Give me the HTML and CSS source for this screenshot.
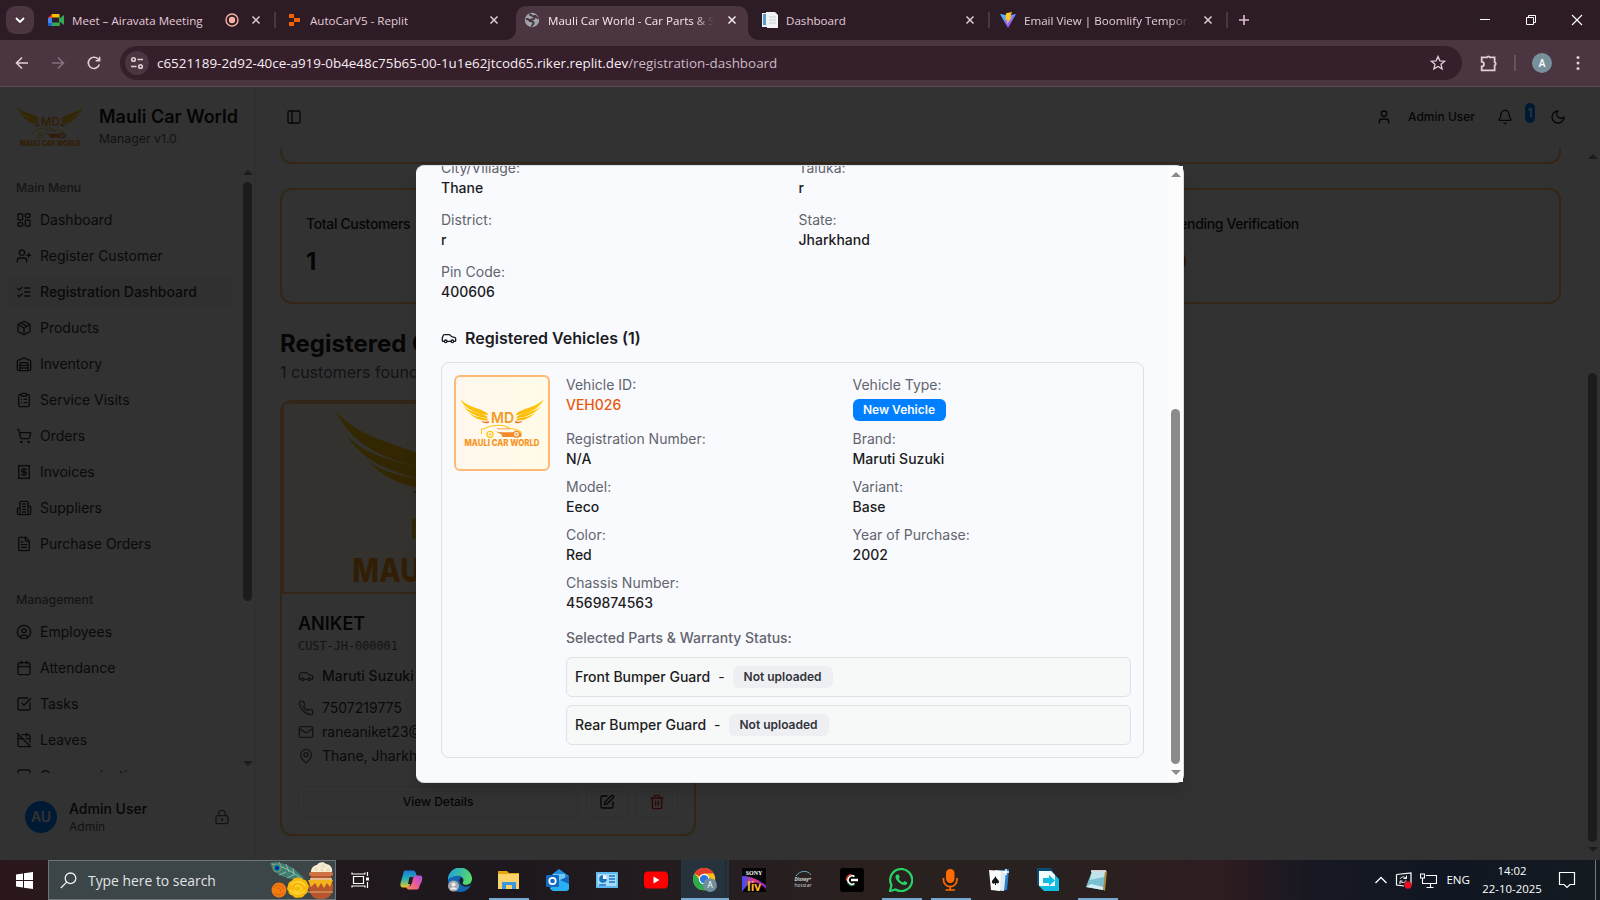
FILE: index.html
```html
<!DOCTYPE html>
<html lang="en">
<head>
<meta charset="utf-8">
<title>Mauli Car World - Car Parts &amp; Service</title>
<link rel="stylesheet" href="styles.css">
</head>
<body>
<svg class="defs" width="0" height="0">
<defs>
<symbol id="i-dash" viewBox="0 0 24 24"><rect x="3" y="3" width="7" height="9" rx="1"/><rect x="14" y="3" width="7" height="5" rx="1"/><rect x="14" y="12" width="7" height="9" rx="1"/><rect x="3" y="16" width="7" height="5" rx="1"/></symbol>
<symbol id="i-userplus" viewBox="0 0 24 24"><path d="M16 21v-2a4 4 0 0 0-4-4H6a4 4 0 0 0-4 4v2"/><circle cx="9" cy="7" r="4"/><path d="M19 8v6M22 11h-6"/></symbol>
<symbol id="i-list" viewBox="0 0 24 24"><path d="m3 17 2 2 4-4M3 7l2 2 4-4M13 6h8M13 12h8M13 18h8"/></symbol>
<symbol id="i-box" viewBox="0 0 24 24"><path d="M11 21.73a2 2 0 0 0 2 0l7-4A2 2 0 0 0 21 16V8a2 2 0 0 0-1-1.73l-7-4a2 2 0 0 0-2 0l-7 4A2 2 0 0 0 3 8v8a2 2 0 0 0 1 1.73zM12 22V12M3.3 7l8.7 5 8.7-5M7.5 4.27l9 5.15"/></symbol>
<symbol id="i-ware" viewBox="0 0 24 24"><path d="M22 8.35V20a2 2 0 0 1-2 2H4a2 2 0 0 1-2-2V8.35A2 2 0 0 1 3.26 6.5l8-3.2a2 2 0 0 1 1.48 0l8 3.2A2 2 0 0 1 22 8.35ZM6 18h12M6 14h12"/><path d="M6 22V10h12v12"/></symbol>
<symbol id="i-clip" viewBox="0 0 24 24"><rect x="8" y="2" width="8" height="4" rx="1"/><path d="M16 4h2a2 2 0 0 1 2 2v14a2 2 0 0 1-2 2H6a2 2 0 0 1-2-2V6a2 2 0 0 1 2-2h2M12 11h4M12 16h4M8 11h.01M8 16h.01"/></symbol>
<symbol id="i-cart" viewBox="0 0 24 24"><circle cx="8" cy="21" r="1"/><circle cx="19" cy="21" r="1"/><path d="M2.05 2.05h2l2.66 12.42a2 2 0 0 0 2 1.58h9.78a2 2 0 0 0 1.95-1.57l1.65-7.43H5.12"/></symbol>
<symbol id="i-receipt" viewBox="0 0 24 24"><path d="M4 2v20l2-1 2 1 2-1 2 1 2-1 2 1 2-1 2 1V2l-2 1-2-1-2 1-2-1-2 1-2-1-2 1Z"/><path d="M16 8h-6a2 2 0 1 0 0 4h4a2 2 0 1 1 0 4H8M12 17.5v-11"/></symbol>
<symbol id="i-bldg" viewBox="0 0 24 24"><path d="M6 22V4a2 2 0 0 1 2-2h8a2 2 0 0 1 2 2v18ZM6 12H4a2 2 0 0 0-2 2v6a2 2 0 0 0 2 2h2M18 9h2a2 2 0 0 1 2 2v9a2 2 0 0 1-2 2h-2M10 6h4M10 10h4M10 14h4M10 18h4"/></symbol>
<symbol id="i-file" viewBox="0 0 24 24"><path d="M15 2H6a2 2 0 0 0-2 2v16a2 2 0 0 0 2 2h12a2 2 0 0 0 2-2V7Z"/><path d="M14 2v4a2 2 0 0 0 2 2h4M10 9H8M16 13H8M16 17H8"/></symbol>
<symbol id="i-usercircle" viewBox="0 0 24 24"><circle cx="12" cy="12" r="10"/><circle cx="12" cy="10" r="3"/><path d="M7 20.66V19a2 2 0 0 1 2-2h6a2 2 0 0 1 2 2v1.66"/></symbol>
<symbol id="i-cal" viewBox="0 0 24 24"><rect x="3" y="4" width="18" height="18" rx="2"/><path d="M8 2v4M16 2v4M3 10h18"/></symbol>
<symbol id="i-check" viewBox="0 0 24 24"><path d="M21 10.5V19a2 2 0 0 1-2 2H5a2 2 0 0 1-2-2V5a2 2 0 0 1 2-2h12.5M9 11l3 3L22 4"/></symbol>
<symbol id="i-caloff" viewBox="0 0 24 24"><path d="M4.2 4.2A2 2 0 0 0 3 6v14a2 2 0 0 0 2 2h14a2 2 0 0 0 1.82-1.18M21 15.5V6a2 2 0 0 0-2-2H9.5M16 2v4M3 10h7M21 10h-5.5M2 2l20 20"/></symbol>
<symbol id="i-msg" viewBox="0 0 24 24"><path d="M21 15a2 2 0 0 1-2 2H7l-4 4V5a2 2 0 0 1 2-2h14a2 2 0 0 1 2 2z"/></symbol>
<symbol id="i-lock" viewBox="0 0 24 24"><circle cx="12" cy="16" r="1"/><rect x="3" y="10" width="18" height="12" rx="2"/><path d="M7 10V7a5 5 0 0 1 10 0v3"/></symbol>
<symbol id="i-panel" viewBox="0 0 24 24"><rect x="3" y="3" width="18" height="18" rx="2"/><path d="M9 3v18"/></symbol>
<symbol id="i-user" viewBox="0 0 24 24"><path d="M19 21v-2a4 4 0 0 0-4-4H9a4 4 0 0 0-4 4v2"/><circle cx="12" cy="7" r="4"/></symbol>
<symbol id="i-bell" viewBox="0 0 24 24"><path d="M10.27 21a2 2 0 0 0 3.46 0M3.26 15.33A1 1 0 0 0 4 17h16a1 1 0 0 0 .74-1.67C19.41 13.96 18 12.5 18 8A6 6 0 0 0 6 8c0 4.5-1.41 5.96-2.74 7.33"/></symbol>
<symbol id="i-moon" viewBox="0 0 24 24"><path d="M12 3a6 6 0 0 0 9 9 9 9 0 1 1-9-9Z"/></symbol>
<symbol id="i-car" viewBox="0 0 24 24"><path d="M19 17h2c.6 0 1-.4 1-1v-3c0-.9-.7-1.7-1.5-1.9C18.7 10.6 16 10 16 10s-1.3-1.4-2.2-2.3c-.5-.4-1.1-.7-1.8-.7H5c-.6 0-1.1.4-1.4.9l-1.4 2.9A3.7 3.7 0 0 0 2 12v4c0 .6.4 1 1 1h2M9 17h6"/><circle cx="7" cy="17" r="2"/><circle cx="17" cy="17" r="2"/></symbol>
<symbol id="i-phone" viewBox="0 0 24 24"><path d="M22 16.92v3a2 2 0 0 1-2.18 2 19.79 19.79 0 0 1-8.63-3.07 19.5 19.5 0 0 1-6-6 19.79 19.79 0 0 1-3.07-8.67A2 2 0 0 1 4.11 2h3a2 2 0 0 1 2 1.72 12.84 12.84 0 0 0 .7 2.81 2 2 0 0 1-.45 2.11L8.09 9.91a16 16 0 0 0 6 6l1.27-1.27a2 2 0 0 1 2.11-.45 12.84 12.84 0 0 0 2.81.7A2 2 0 0 1 22 16.92z"/></symbol>
<symbol id="i-mail" viewBox="0 0 24 24"><rect x="2" y="4" width="20" height="16" rx="2"/><path d="m22 7-8.97 5.7a1.94 1.94 0 0 1-2.06 0L2 7"/></symbol>
<symbol id="i-pin" viewBox="0 0 24 24"><path d="M20 10c0 5-5.54 10.19-7.4 11.8a1 1 0 0 1-1.2 0C9.54 20.19 4 15 4 10a8 8 0 0 1 16 0"/><circle cx="12" cy="10" r="3"/></symbol>
<symbol id="i-edit" viewBox="0 0 24 24"><path d="M12 3H5a2 2 0 0 0-2 2v14a2 2 0 0 0 2 2h14a2 2 0 0 0 2-2v-7"/><path d="M18.38 2.62a1 1 0 0 1 3 3l-9.01 9.01a2 2 0 0 1-.85.5l-2.87.84a.5.5 0 0 1-.62-.62l.84-2.87a2 2 0 0 1 .5-.85z"/></symbol>
<symbol id="i-trash" viewBox="0 0 24 24"><path d="M3 6h18M19 6v14a2 2 0 0 1-2 2H7a2 2 0 0 1-2-2V6M8 6V4a2 2 0 0 1 2-2h4a2 2 0 0 1 2 2v2M10 11v6M14 11v6"/></symbol>
<symbol id="i-x" viewBox="0 0 10 10"><path d="M1.5 1.5l7 7M8.5 1.5l-7 7"/></symbol>
<linearGradient id="wing" x1="0" y1="0" x2="0" y2="1"><stop offset="0" stop-color="#ffcf00"/><stop offset="1" stop-color="#fbb80f"/></linearGradient>
<g id="wing-shape"><path d="M0 0C8 8 17 8.500 25 12.500c2 1 3 2.500 3 3.500C17 14.500 5 10.500 0 0Z" fill="url(#wing)"/><path d="M3 6.500c6 6.500 15 7 22 9.500 2 1 2.500 2 2.500 3.200C17 17.500 8 14.500 3 6.500Z" fill="url(#wing)"/><path d="M9 13.500c5 4 11 4 16 5.500 2 .7 3 1.500 3 2.300-7 0-14-2-19-7.800Z" fill="url(#wing)"/><path d="M21 21.700c2 .8 5 1 8 .3v1.600c-3 .8-6 0-8-1.900Z" fill="#e8702a"/></g>
<symbol id="logo" viewBox="0 0 84 47.500" preserveAspectRatio="none">
<use href="#wing-shape"/><use href="#wing-shape" transform="translate(84 0) scale(-1 1)"/>
<text x="31" y="23.700" textLength="23" lengthAdjust="spacingAndGlyphs" class="logo-md">MD</text>
<path d="M21.500 35v-5c4-.5 7-3 11-3.600 7-1 13-.5 17 2.600 5 .6 10 1 12 4.500" fill="none" stroke="#ffc61a" stroke-width="1"/>
<path d="M34 32c9 2 18 0 27 1.500 1 2 .5 4-1 4.200H42c1-3-3-4-8-5.700Z" fill="#f08a2c"/>
<path d="M37 29.500h13" stroke="#f08a2c" stroke-width=".8"/>
<circle cx="30" cy="35" r="3" fill="none" stroke="#ffc61a" stroke-width="1.300"/><circle cx="30" cy="35" r="1" fill="#ffc61a"/>
<circle cx="56.500" cy="35" r="3" fill="#fff4d8" stroke="#f08a2c" stroke-width="1.300"/><circle cx="56.500" cy="35" r="1" fill="#f08a2c"/>
<text x="4.500" y="47" textLength="75" lengthAdjust="spacingAndGlyphs" class="logo-name">MAULI CAR WORLD</text>
</symbol>
</defs>
</svg>

<header class="tabs">
  <div class="tab-search"><svg width="10" height="6" viewBox="0 0 10 6"><path d="M1 1l4 4 4-4" fill="none" stroke="#fff" stroke-width="1.800"/></svg></div>
  <div class="tab t1">
    <svg class="fav" viewBox="0 0 16 16"><path d="M4 2h7v3.500H4z" fill="#fbbc04"/><path d="M4 2v4H0z" fill="#ea4335"/><path d="M0 6h4v5H0z" fill="#4285f4"/><path d="M0 11h4v3H1.500A1.500 1.500 0 0 1 0 12.500z" fill="#1a67d2"/><path d="M4 10.500h7V14H4z" fill="#34a853"/><path d="M11 2h.8v12H11zM11.500 6.500 16 3v10l-4.500-3.500z" fill="#34a853"/></svg>
    <span class="tab-title">Meet – Airavata Meeting</span>
    <svg class="rec" viewBox="0 0 14 14"><circle cx="7" cy="7" r="6" fill="none" stroke="#f7b2a6" stroke-width="1.400"/><circle cx="7" cy="7" r="3.200" fill="#f7b2a6"/></svg>
    <svg class="x"><use href="#i-x"/></svg>
  </div>
  <i class="tsep"></i>
  <div class="tab t2">
    <svg class="fav" viewBox="0 0 16 16"><path d="M3 2h5v4H3zM8 6h6v4H8zM3 10h5v4H3z" fill="#f26207"/></svg>
    <span class="tab-title">AutoCarV5 - Replit</span>
    <svg class="x"><use href="#i-x"/></svg>
  </div>
  <div class="tab t3 active">
    <svg class="fav" viewBox="0 0 16 16"><circle cx="8" cy="8" r="7.200" fill="#9fa5a8"/><path d="M5 2.500c3 0 3 2 5 2s0 3-2 3-1 2 1 2.500-1 4-2 4M2 7c3 0 4 1 4 3M11 3c0 2 3 2 3 4" fill="none" stroke="#4a3440" stroke-width="1.900"/></svg>
    <span class="tab-title fade">Mauli Car World - Car Parts &amp; Se</span>
    <svg class="x"><use href="#i-x"/></svg>
  </div>
  <div class="tab t4">
    <svg class="fav" viewBox="0 0 16 16"><path d="M0 1h6v14H0z" fill="#e8f2f8"/><path d="M1 2h3v11H1z" fill="#5c9dc4"/><path d="M4 0h9l3 3v13H5z" fill="#f1f3f4"/><path d="M7 5h7M7 8h7M7 11h7" stroke="#c5ccd1"/></svg>
    <span class="tab-title">Dashboard</span>
    <svg class="x"><use href="#i-x"/></svg>
  </div>
  <i class="tsep"></i>
  <div class="tab t5">
    <svg class="fav" viewBox="0 0 16 16"><defs><linearGradient id="vt" x1="0" y1="0" x2=".7" y2="1"><stop offset="0" stop-color="#41d1ff"/><stop offset="1" stop-color="#bd34fe"/></linearGradient></defs><path d="M0 2l8 1.500L16 2 8 16z" fill="url(#vt)"/><path d="M12 0 6 1.200 5.500 8l2-.4L7 12l5-7.500-2 .4z" fill="#ffc920"/></svg>
    <span class="tab-title fade">Email View | Boomlify Temporary</span>
    <svg class="x"><use href="#i-x"/></svg>
  </div>
  <i class="tsep"></i>
  <svg class="plus" viewBox="0 0 12 12"><path d="M6 1v10M1 6h10" stroke="#e0c0d0" stroke-width="1.600"/></svg>
  <div class="winbtns">
    <svg viewBox="0 0 12 12"><path d="M1 5.500h10" stroke="#fff"/></svg>
    <svg viewBox="0 0 12 12"><path d="M1.500 3.500h7v7h-7zM3.500 3.500v-2h7v7h-2" fill="none" stroke="#fff"/></svg>
    <svg viewBox="0 0 12 12"><path d="M1 1l10 10M11 1 1 11" stroke="#fff" stroke-width="1.100"/></svg>
  </div>
</header>

<div class="toolbar">
  <svg class="nav" viewBox="0 0 16 16"><path d="M14 8H3M8 2.500 2.500 8 8 13.500"/></svg>
  <svg class="nav dim" viewBox="0 0 16 16"><path d="M2 8h11M8 2.500 13.500 8 8 13.500"/></svg>
  <svg class="nav" viewBox="0 0 16 16"><path d="M13.300 9.500A5.600 5.600 0 1 1 12 4l1.500 1.600M13.600 1.800v4H9.600"/></svg>
  <div class="omni">
    <span class="chip"><svg width="14" height="14" viewBox="0 0 14 14"><circle cx="3.500" cy="3.500" r="1.800"/><path d="M7.500 3.500H13M1 10.500h5.500"/><circle cx="10.500" cy="10.500" r="1.800"/></svg></span>
    <span class="url">c6521189-2d92-40ce-a919-0b4e48c75b65-00-1u1e62jtcod65.riker.replit.dev<em>/registration-dashboard</em></span>
    <svg class="star" viewBox="0 0 16 16"><path d="m8 1.500 1.900 4.300 4.700.4-3.600 3 1.100 4.600L8 11.400l-4.100 2.400L5 9.200l-3.600-3 4.700-.4z"/></svg>
  </div>
  <svg class="puzzle" viewBox="0 0 16 16"><path d="M1.500 3h4.700a1.400 1.400 0 0 1 2.600 0H13v4.200a1.500 1.500 0 0 1 0 2.800v4.500H1.500V11a2 2 0 0 0 0-4z"/></svg>
  <i class="bsep"></i>
  <span class="avatar-a">A</span>
  <svg class="dots" viewBox="0 0 4 16"><circle cx="2" cy="2.500" r="1.500"/><circle cx="2" cy="8" r="1.500"/><circle cx="2" cy="13.500" r="1.500"/></svg>
</div>

<div class="app">
  <aside class="sidebar">
    <div class="brand">
      <svg class="brand-logo"><use href="#logo"/></svg>
      <div><div class="brand-name">Mauli Car World</div><div class="brand-sub">Manager v1.0</div></div>
    </div>
    <div class="side-body">
      <nav class="menu">
        <div class="label">Main Menu</div>
        <a><svg class="ic"><use href="#i-dash"/></svg>Dashboard</a>
        <a><svg class="ic"><use href="#i-userplus"/></svg>Register Customer</a>
        <a class="on"><svg class="ic"><use href="#i-list"/></svg>Registration Dashboard</a>
        <a><svg class="ic"><use href="#i-box"/></svg>Products</a>
        <a><svg class="ic"><use href="#i-ware"/></svg>Inventory</a>
        <a><svg class="ic"><use href="#i-clip"/></svg>Service Visits</a>
        <a><svg class="ic"><use href="#i-cart"/></svg>Orders</a>
        <a><svg class="ic"><use href="#i-receipt"/></svg>Invoices</a>
        <a><svg class="ic"><use href="#i-bldg"/></svg>Suppliers</a>
        <a><svg class="ic"><use href="#i-file"/></svg>Purchase Orders</a>
        <div class="label second">Management</div>
        <a><svg class="ic"><use href="#i-usercircle"/></svg>Employees</a>
        <a><svg class="ic"><use href="#i-cal"/></svg>Attendance</a>
        <a><svg class="ic"><use href="#i-check"/></svg>Tasks</a>
        <a><svg class="ic"><use href="#i-caloff"/></svg>Leaves</a>
        <a><svg class="ic"><use href="#i-msg"/></svg>Communication</a>
      </nav>
      <div class="sb sb-side"><i class="up"></i><b></b><i class="down"></i></div>
    </div>
    <div class="side-foot">
      <span class="au">AU</span>
      <div class="who"><div>Admin User</div><small>Admin</small></div>
      <svg class="ic"><use href="#i-lock"/></svg>
    </div>
  </aside>
  <main class="main">
    <div class="topbar">
      <svg class="ic"><use href="#i-panel"/></svg>
      <div class="topright">
        <svg class="ic"><use href="#i-user"/></svg>
        <span class="tname">Admin User</span>
        <svg class="ic bell"><use href="#i-bell"/></svg>
        <span class="count">1</span>
        <svg class="ic"><use href="#i-moon"/></svg>
      </div>
    </div>
    <div class="scroller">
      <div class="content">
        <div class="cut-card"></div>
        <div class="stats">
          <div class="stat first"><div class="st">Total Customers</div><div class="num">1</div></div>
          <div class="stat mid"></div>
          <div class="stat last"><div class="st">Pending Verification</div><div class="num red">0</div></div>
        </div>
        <h2>Registered Customers</h2>
        <p class="found">1 customers found</p>
        <div class="customer">
          <div class="photo"><svg><use href="#logo"/></svg></div>
          <div class="cbody">
            <h3>ANIKET</h3>
            <div class="cid">CUST-JH-000001</div>
            <div class="row car"><svg class="ic"><use href="#i-car"/></svg>Maruti Suzuki Eeco</div>
            <div class="row"><svg class="ic"><use href="#i-phone"/></svg>7507219775</div>
            <div class="row"><svg class="ic"><use href="#i-mail"/></svg>raneaniket23@</div>
            <div class="row"><svg class="ic"><use href="#i-pin"/></svg>Thane, Jharkhand</div>
            <div class="btns">
              <span class="btn wide">View Details</span>
              <span class="btn"><svg class="ic"><use href="#i-edit"/></svg></span>
              <span class="btn del"><svg class="ic"><use href="#i-trash"/></svg></span>
            </div>
          </div>
        </div>
      </div>
      <div class="sb sb-main"><i class="up"></i><b></b><i class="down"></i></div>
    </div>
  </main>
  <div class="overlay"></div>
  <div class="modal">
    <div class="mclip">
      <div class="mcontent">
        <div class="addr">
          <div><label>City/Village:</label><p>Thane</p></div>
          <div><label>Taluka:</label><p>r</p></div>
          <div><label>District:</label><p>r</p></div>
          <div><label>State:</label><p>Jharkhand</p></div>
          <div><label>Pin Code:</label><p>400606</p></div>
        </div>
        <h4><svg class="ic"><use href="#i-car"/></svg>Registered Vehicles (1)</h4>
        <div class="vehicle">
          <div class="thumb"><svg><use href="#logo"/></svg></div>
          <div class="vinfo">
            <div class="vgrid">
              <div><label>Vehicle ID:</label><p class="vid">VEH026</p></div>
              <div><label>Vehicle Type:</label><span class="badge">New Vehicle</span></div>
              <div><label>Registration Number:</label><p>N/A</p></div>
              <div><label>Brand:</label><p>Maruti Suzuki</p></div>
              <div><label>Model:</label><p>Eeco</p></div>
              <div><label>Variant:</label><p>Base</p></div>
              <div><label>Color:</label><p>Red</p></div>
              <div><label>Year of Purchase:</label><p>2002</p></div>
              <div><label>Chassis Number:</label><p>4569874563</p></div>
            </div>
            <div class="parts-label">Selected Parts &amp; Warranty Status:</div>
            <div class="part"><span>Front Bumper Guard</span><span class="dash">-</span><span class="badge grey">Not uploaded</span></div>
            <div class="part"><span>Rear Bumper Guard</span><span class="dash">-</span><span class="badge grey">Not uploaded</span></div>
          </div>
        </div>
      </div>
      <div class="sb sb-modal"><i class="up"></i><b></b><i class="down"></i></div>
    </div>
  </div>
</div>

<footer class="taskbar">
  <span class="start"><svg width="17" height="17" viewBox="0 0 17 17"><path d="M0 2.400 7 1.400V8H0zM8 1.300 17 0v8H8zM0 9h7v6.600L0 14.600zM8 9h9v8l-9-1.300z" fill="#fff"/></svg></span>
  <div class="search">
    <svg width="17" height="17" viewBox="0 0 17 17"><circle cx="10.500" cy="6.300" r="5.300" fill="none" stroke="#f0f0f0" stroke-width="1.300"/><path d="M6.700 10.100.8 16" stroke="#f0f0f0" stroke-width="1.300"/></svg>
    <span>Type here to search</span>
    <svg class="art" viewBox="0 0 64 38"><path d="M1 2c8-3 22 2 32 13 2 2 2 3 1 4C22 19 5 16 1 2Z" fill="#3f7f78"/><path d="M3 3c10 2 22 8 31 16M10 1l3 6M17 3l3 8M24 7l1 8M5 9l6-2M10 14l7-3M18 17l6-3" stroke="#a8c9a0" stroke-width=".8" fill="none"/><circle cx="8" cy="7" r="4.500" fill="#8f8a4a"/><circle cx="8" cy="7" r="3.400" fill="#0a90a8"/><circle cx="8" cy="7" r="2" fill="#16208a"/><circle cx="10" cy="29" r="7.500" fill="#f27a10"/><path d="M4 27c4-4 9-3 11 1M5 32c3 3 8 2 10-1M8 28c2-2 5 0 3 3" stroke="#d9600a" fill="none"/><path d="M42 14h20v5c3 5 3 11-2 17-5 3-11 3-16 0-5-6-5-12-2-17z" fill="#b9552c"/><path d="M41 18h22" stroke="#f6dfb0" stroke-width="1.500"/><path d="M39 31h25" stroke="#e0b070" stroke-width="1"/><path d="M39 19h25l-3 7-3-4-3 5-3-5-3 5-3-5-4 4z" fill="#f3b21e"/><rect x="40" y="11" width="24" height="4" rx="2" fill="#cf7345"/><path d="M42 11c0-5 4-7 6-7 1-3 7-4 9-1 4 0 7 4 6 8z" fill="#f7ecd2"/><circle cx="47" cy="8" r="1.500" fill="#e8d8b4"/><circle cx="54" cy="5" r="1.500" fill="#e8d8b4"/><circle cx="59" cy="9" r="1.500" fill="#e8d8b4"/><circle cx="53" cy="9" r="1.300" fill="#e8d8b4"/><path d="M29 16.500c3 0 4 1 5 2 3 0 4 2 4.500 4 2 2 1.500 4 .5 6 0 3-1 4-3 5-2 3-4 3.500-6 3-3 1-5 0-6.500-2-3-.5-4-2-4-4-2-2-1.500-4-.5-6 0-3 2-4 4-5 1-2 3-3 6-3Z" fill="#f9b80c"/><path d="M22 24c4-5 12-4 14 1M21 29c4 5 12 5 15 0M26 26c3-3 8 0 6 3-2 3-7 2-7-1" stroke="#ffdc3c" stroke-width="1.300" fill="none"/></svg>
  </div>
  <div class="apps">
    <span class="view"><svg viewBox="0 0 24 24"><path d="M5.500 8.500h10v7h-10zM4 4.500v1.500h13V4.500M4 19.500V18h13v1.500M19.500 4v4M19.500 14v6" fill="none" stroke="#fff" stroke-width="1.200"/><path d="M18 9.500h3v3h-3z" fill="#fff"/></svg></span>
    <span><svg viewBox="0 0 24 24"><defs><linearGradient id="c1" x1="0" y1="0" x2="0" y2="1"><stop offset="0" stop-color="#1a78d8"/><stop offset=".5" stop-color="#25b1b0"/><stop offset="1" stop-color="#f0c52a"/></linearGradient><linearGradient id="c2" x1="1" y1="0" x2="0" y2="1"><stop offset="0" stop-color="#a150e8"/><stop offset=".5" stop-color="#e85a9a"/><stop offset="1" stop-color="#ff8b4a"/></linearGradient></defs><path d="M6 2.500h8c2 0 2.500 1.500 3 3l1 3c-4-1-5 1-6 4l-1 4c-1 3-2 3-4 3H4c-3 0-3-3-2-6l2-7c.5-2 1-4 2-4Z" fill="url(#c1)"/><path d="M18 21.500h-8c-2 0-2.500-1.500-3-3 4 1 5-1 6-4l1-4c1-3 2-3 4-3h3c3 0 2.500 3 1.700 6L20.500 18c-.5 2-1 3.500-2.500 3.500Z" fill="url(#c2)"/><path d="M10.500 9h3l-1.500 7H9z" fill="#241c1f"/></svg></span>
    <span><svg viewBox="0 0 24 24"><defs><linearGradient id="ed" x1="0" x2="1" y1="0" y2=".3"><stop offset="0" stop-color="#1b9de2"/><stop offset="1" stop-color="#55d96b"/></linearGradient></defs><circle cx="12" cy="12" r="12" fill="#1265b5"/><path d="M0 12A12 12 0 0 1 24 11c0 4-3 6-6 6-4 0-4-2-3-3 2-4-2-7-6-6-4 0-8 2-9 4Z" fill="url(#ed)"/><path d="M13.500 9.500c-2.500 1-3 3.500-1.500 6 2 3 6 4 10.500 2.200L24 15v-3l-1 2.500c-2 2.500-6 3-8 1.500-1.200-1 .5-2 .3-3.800-.2-1.300-.9-2.200-1.800-2.700Z" fill="#1d1f26"/><circle cx="5.500" cy="18" r="5.500" fill="#a6abb0"/><circle cx="5.500" cy="16.500" r="2" fill="#eee"/><path d="M2 21.500c1-3 6-3 7 0z" fill="#eee"/></svg></span>
    <span class="open"><svg viewBox="0 0 24 24"><path d="M1 3h9l2 2h10v4H1z" fill="#e5a50f"/><path d="M1 6h21v15H1z" fill="#fcd36a"/><path d="M5 21v-7h14v7h-4v-4H9v4z" fill="#3a96dd"/></svg></span>
    <span><svg viewBox="0 0 24 24"><path d="M4 8 13 1l10 7v13H4z" fill="#1f8de0"/><path d="M7 6h12v9H7z" fill="#6fc7f6"/><path d="m4 21 10-9 9-4v12q0 3-3 3H7z" fill="#2ab0f4"/><path d="m14 12 9-4v8z" fill="#1763b5"/><rect y="7" width="13" height="12" rx="1" fill="#1269bf"/><circle cx="6.500" cy="13" r="3.200" fill="none" stroke="#fff" stroke-width="1.800"/></svg></span>
    <span><svg viewBox="0 0 24 24"><path d="M1 4h22v16H1z" fill="#5fb9ee"/><path d="M2.500 6h19v12h-19z" fill="#a5dcf8"/><circle cx="8" cy="11" r="3.800" fill="#1a74be"/><path d="M8 11V7a4 4 0 0 1 4 4z" fill="#fff"/><path d="M14 8h6M14 11h6M14 14h6M4 17h7" stroke="#1a74be" stroke-width="1.500"/></svg></span>
    <span><svg viewBox="0 0 24 24"><rect y="3.500" width="24" height="17" rx="4" fill="#f00"/><path d="m9.500 8.500 6 3.500-6 3.500z" fill="#fff"/></svg></span>
    <span class="open current"><svg viewBox="0 0 26 26"><circle cx="12" cy="12" r="12" fill="#fbc116"/><path d="M12 12 1.600 6A12 12 0 0 1 22.400 6H12z" fill="#e33b2e"/><path d="M1.600 6A12 12 0 0 0 12 24l5-9H9z" fill="#2da94f"/><circle cx="12" cy="12" r="5.700" fill="#fff"/><circle cx="12" cy="12" r="4.500" fill="#2f74e0"/><circle cx="18.500" cy="18.500" r="7.500" fill="#728d9b"/><text x="18.500" y="22" text-anchor="middle" class="a-txt">A</text></svg></span>
    <span><svg viewBox="0 0 24 24"><defs><linearGradient id="sl" x1="0" x2="1"><stop offset="0" stop-color="#3b4cf0"/><stop offset=".5" stop-color="#e13a8a"/><stop offset="1" stop-color="#7a28c8"/></linearGradient></defs><path fill="#050406" d="M0 0h24v24H0z"/><path d="M0 8c8 0 15 3 24 9v4C15 12 8 12 0 24z" fill="url(#sl)"/><text x="12" y="6.800" text-anchor="middle" class="sony">SONY</text><text x="5" y="22.500" class="liv">liv</text></svg></span>
    <span><svg viewBox="0 0 24 24"><path d="M5 8c4-6 12-6 15-1" stroke="#5fa8b8" fill="none"/><text x="12" y="13" text-anchor="middle" textLength="17" lengthAdjust="spacingAndGlyphs" class="hot it">Disney+</text><text x="12" y="19" text-anchor="middle" textLength="17" lengthAdjust="spacingAndGlyphs" class="hot">hotstar</text></svg></span>
    <span><svg viewBox="0 0 24 24"><rect width="24" height="24" rx="3" fill="#000"/><path d="M14.500 8.500a4.200 4.200 0 1 0 0 7" stroke="#fff" stroke-width="1.800" fill="none"/><path d="M11 6.500a5.500 5.500 0 0 0-4.500 6" stroke="#e34a35" stroke-width="1.500" fill="none"/><path d="M7.500 15c2 3 5 3 7 1.500" stroke="#3ba55d" fill="none"/><path d="M11 12h7" stroke="#fff" stroke-width="2.500"/></svg></span>
    <span class="open"><svg viewBox="0 0 24 24"><path d="M1 23l1.500-5.800A11 11 0 1 1 6.600 21.500z" fill="none" stroke="#28d366" stroke-width="2.200"/><path d="M8 6.500c-2 1-2 3.500.5 6.500s5.500 4.500 8 4c1.500-.5 2-2 1.500-2.700L15.500 13l-1.500 1.500c-2-.8-3.300-2-4.200-3.800L10.800 9 9.500 6.500z" fill="#28d366"/></svg></span>
    <span class="open"><svg viewBox="0 0 24 24"><rect x="8" y="1" width="8.500" height="14" rx="4.200" fill="#ff6b00"/><path d="M5.500 10v2a6.700 6.700 0 0 0 13.400 0v-2M12.200 18.500V22M7.500 22h9.500" stroke="#ff6b00" stroke-width="1.700" fill="none"/></svg></span>
    <span><svg viewBox="0 0 24 24"><path d="m11 3 11-2-2 21-9 1z" fill="#2a7fd0"/><path d="m8 2 11 1-2 20-9-1z" fill="#dfeaf4"/><path d="m2 2 12 1-1 20-9-1z" fill="#fafafa"/><path d="M8.500 8c-1 3-4 4-3.500 6.500.5 1.500 2.500 1.500 3 .2V17h1v-2.300c1 1.300 3 .8 3-.7 0-2.500-3-3-3.500-6Z" fill="#111"/><path d="M19 1v6M16 4h6" stroke="#fff" stroke-width="1.500"/></svg></span>
    <span><svg viewBox="0 0 24 24"><path d="M1 0h14l3 5v12H1z" fill="#0c4a73"/><path d="M3 3h12l8 8v12H8l-5-5z" fill="#12bce0"/><path d="M3 3h12l4 4v11H3z" fill="#f4fbfd"/><path d="M7 10h6V7l6 5.500-6 5.500v-3H7z" fill="#12bce0"/></svg></span>
    <span class="open"><svg viewBox="0 0 24 24"><path d="m8 2 14 1-2 20-3-2z" fill="#b08a3c"/><path d="m7 3 13 0-2 19L1 19z" fill="#79bfd0"/><path d="m7 3 13 0-1 6L5 12z" fill="#c0e3ea"/><path d="M6 3h15" stroke="#d7dde0" stroke-width="1.800"/><path d="m1 19 5-3 12 3v3z" fill="#d4eef4"/></svg></span>
  </div>
  <div class="tray">
    <svg width="14" height="14" viewBox="0 0 14 14"><path d="m1.500 10 5.500-5.500L12.500 10" fill="none" stroke="#fff" stroke-width="1.300"/></svg>
    <svg width="18" height="17" viewBox="0 0 18 17"><path d="M1.500 2.500 16 1v11.500M9 14l-7.500-1V2.500" fill="none" stroke="#fff" stroke-width="1.200"/><path d="M5 7c1-2 4-3 6-1M11.500 3.500v3h-3M11 8.500c-1 2-4 3-5.500 1M5 12V9h2.500" stroke="#fff" fill="none"/><circle cx="13" cy="13" r="3.700" fill="#e81123"/></svg>
    <svg width="17" height="17" viewBox="0 0 17 17"><path d="M6 3.500h10.500v8H5M10.500 11.500v3.500M6.500 15.500h7M.5 2h4v4h-4zM2.500 6v5.500H5" fill="none" stroke="#fff" stroke-width="1.100"/></svg>
    <span class="lang">ENG</span>
    <div class="clock"><div>14:02</div><div>22-10-2025</div></div>
    <svg width="18" height="18" viewBox="0 0 18 18"><path d="M1.500 1.500h15v12H12l-3 3-3-3H1.500z" fill="none" stroke="#fff" stroke-width="1.200"/></svg>
    <i></i>
  </div>
</footer>
</body>
</html>
```
FILE: styles.css
```css
* { box-sizing: border-box; }
body { margin: 0; width: 1600px; height: 900px; overflow: hidden; display: flex; flex-direction: column; font-family: Inter, "Liberation Sans", sans-serif; font-size: 14px; line-height: 20px; color: #1c1c22; }
h2, h3, h4, p { margin: 0; }
svg { display: block; flex: none; }
.defs { position: absolute; }
.ic { width: 16px; height: 16px; fill: none; stroke: currentColor; stroke-width: 2; stroke-linecap: round; stroke-linejoin: round; }
.logo-md { font: 600 14.5px Inter, sans-serif; fill: #f39a26; }
.logo-name { font: 800 9px Inter, sans-serif; fill: #f7941d; }

/* browser tabs */
.tabs { height: 40px; flex: none; background: #2d1b26; display: flex; align-items: center; padding-left: 6px; font: 11.6px "Open Sans", sans-serif; color: #e3cbd7; }
.tab-search { width: 28px; height: 28px; border-radius: 9px; background: #4a3541; display: flex; align-items: center; justify-content: center; }
.tab { display: flex; align-items: center; height: 34px; margin-top: 6px; padding-bottom: 6px; }
.fav { width: 16px; height: 16px; margin-right: 8px; }
.tab-title { flex: 1; white-space: nowrap; overflow: hidden; line-height: 18px; padding-top: 1px; }
.fade { -webkit-mask-image: linear-gradient(90deg, #000 88%, transparent); mask-image: linear-gradient(90deg, #000 88%, transparent); }
.x { width: 10px; height: 10px; stroke: currentColor; stroke-width: 1.5; fill: none; }
.rec { width: 14px; height: 14px; margin-right: 12px; }
.t1 { width: 213px; margin-left: 14px; }
.t2 { width: 213px; margin-left: 10px; }
.t3 { position: relative; width: 232px; margin-left: 17px; padding-left: 8px; padding-right: 11px; border-radius: 10px 10px 0 0; background: #4a3541; color: #f6e8ef; }
.t3::before, .t3::after { content: ""; position: absolute; bottom: 0; width: 10px; height: 10px; }
.t3::before { left: -10px; background: radial-gradient(circle at 0 0, transparent 9.5px, #4a3541 10px); }
.t3::after { right: -10px; background: radial-gradient(circle at 100% 0, transparent 9.5px, #4a3541 10px); }
.t3 .tab-title, .t5 .tab-title { margin-right: 13px; }
.t4 { width: 213px; margin-left: 14px; }
.t5 { width: 213px; margin-left: 10px; }
.tsep { width: 2px; height: 16px; background: #4a3541; margin-left: 13px; }
.plus { width: 12px; height: 12px; margin-left: 10px; }
.winbtns { margin-left: auto; display: flex; gap: 34px; padding-right: 17px; }
.winbtns svg { width: 12px; height: 12px; }

.toolbar { height: 47px; flex: none; background: #4a3541; border-bottom: 1px solid #5e4955; display: flex; align-items: center; padding-left: 14px; color: #e3cbd7; }
.toolbar svg { fill: none; stroke: currentColor; stroke-width: 1.6; }
.nav { width: 16px; height: 16px; margin-right: 20px; }
.nav.dim { color: #876f7c; }
.toolbar .nav:nth-child(3) { margin-right: 18px; }
.omni { width: 1342px; height: 34px; border-radius: 17px; background: #341f2b; display: flex; align-items: center; padding: 0 16px 0 5px; }
.chip { width: 24px; height: 24px; border-radius: 50%; background: #4a3541; display: flex; align-items: center; justify-content: center; }
.url { margin-left: 8px; flex: 1; font: 13.41px/18px "Open Sans", sans-serif; color: #f8ecf2; white-space: nowrap; }
.url em { font-style: normal; color: #cdbac4; }
.star { width: 16px; height: 16px; }
.toolbar .star { stroke-width: 1.3; }
.puzzle { width: 18px; height: 18px; margin-left: 18px; }
.bsep { width: 2px; height: 16px; background: #66515d; margin-left: 16px; }
.avatar-a { width: 20px; height: 20px; border-radius: 50%; background: #78909c; color: #fff; font: 600 10px/20px "Open Sans", sans-serif; text-align: center; margin-left: 16px; }
.toolbar .dots { width: 4px; height: 16px; margin-left: 24px; fill: #e3cbd7; stroke: none; }

/* application */
.app { position: relative; height: 773px; display: flex; background: #fafafa; }
.sidebar { width: 256px; border-right: 1px solid #e8e8ea; display: flex; flex-direction: column; background: #f8f8f8; }
.brand { height: 77px; flex: none; border-bottom: 1px solid #ebebeb; display: flex; align-items: center; gap: 15px; padding: 2px 0 0 16px; }
.brand-logo { width: 68px; height: 40px; }
.brand-name { font-size: 18px; font-weight: 600; line-height: 24px; color: #18181b; white-space: nowrap; }
.brand-sub { font-size: 12.3px; line-height: 16px; color: #606068; margin-top: 2px; }
.side-body { height: 609px; display: flex; overflow: hidden; }
.menu { width: 240px; padding: 8px; display: flex; flex-direction: column; gap: 4px; }
.label { height: 32px; flex: none; line-height: 32px; padding-left: 8px; font-size: 12.3px; font-weight: 500; color: #6a6a72; margin-bottom: -4px; }
.label.second { margin-top: 20px; }
.menu a { height: 32px; flex: none; width: 224px; display: flex; align-items: center; gap: 8px; padding-left: 8px; border-radius: 6px; color: #33333a; white-space: nowrap; }
.menu a.on { background: #ededed; font-weight: 500; }
.sb { width: 15px; display: flex; flex-direction: column; align-items: center; color: #8b8b8b; }
.sb b { width: 9px; border-radius: 5px; background: currentColor; }
.sb i { width: 0; height: 0; border: 5px solid transparent; }
.sb .up { border-top: 0; border-bottom: 5px solid currentColor; }
.sb .down { border-bottom: 0; border-top: 5px solid currentColor; }
.sb-side { padding-top: 6px; }
.sb-side b { height: 419px; margin: 7px 0 160px; }
.side-foot { flex: 1; border-top: 1px solid #ebebeb; display: flex; align-items: center; padding: 0 25px 0 25px; }
.au { width: 32px; height: 32px; border-radius: 50%; background: #0080ff; color: #f5f5f5; font-weight: 600; line-height: 32px; text-align: center; }
.who { margin-left: 12px; flex: 1; font-weight: 500; line-height: 18px; }
.who small { display: block; font-size: 12px; font-weight: 400; color: #606068; line-height: 17px; }
.side-foot .ic { color: #606068; }

.main { flex: 1; display: flex; flex-direction: column; }
.topbar { height: 61px; flex: none; border-bottom: 1px solid #ebebeb; display: flex; align-items: center; justify-content: space-between; padding: 0 34px 0 30px; }
.topright { display: flex; align-items: center; }
.tname { margin-left: 16px; font-size: 12px; font-weight: 500; width: 67px; white-space: nowrap; }
.bell { margin-left: 22px; }
.count { width: 10px; height: 20px; border-radius: 6px; background: #0080ff; color: #fafafa; font-size: 12px; font-weight: 600; text-align: center; margin: -8px 15px 0 12px; }
.scroller { flex: 1; display: flex; height: 712px; overflow: hidden; }
.content { width: 1305px; padding-left: 24px; }
.cut-card { height: 16px; border: 2px solid #fdba74; border-top: 0; border-radius: 0 0 12px 12px; }
.stats { display: grid; grid-template-columns: repeat(3, 1fr); gap: 16px; margin-top: 24px; }
.stat { height: 116px; border: 2px solid #fdba74; border-radius: 12px; padding: 24px; font-weight: 500; }
.st { letter-spacing: -.025em; }
.num { font-size: 24px; font-weight: 700; line-height: 32px; margin-top: 12px; }
.red { color: #ea580c; }
h2 { font-size: 24px; line-height: 32px; font-weight: 700; margin-top: 24px; }
.found { font-size: 16px; line-height: 24px; color: #606068; }
.customer { width: 416px; height: 436px; margin-top: 16px; border: 2px solid #fdba74; border-radius: 12px; overflow: hidden; }
.photo { height: 192px; border: 2px solid #fdba74; background: linear-gradient(90deg, #fff7ed, #fffbe8); display: flex; align-items: center; justify-content: center; }
.photo svg { width: 304px; height: 172px; }
.cbody { padding: 16px; }
h3 { font-size: 18px; line-height: 28px; font-weight: 600; }
.cid { font: 11.85px/16px "DejaVu Sans Mono", monospace; color: #606068; }
.row { display: flex; align-items: center; gap: 8px; height: 20px; margin-top: 4px; white-space: nowrap; color: #33333a; }
.row .ic { color: #606068; }
.row.car { margin: 12px 0; font-weight: 500; }
.btns { display: flex; gap: 8px; margin-top: 20px; }
.btn { width: 42px; height: 32px; border: 1px solid #e6e6ea; border-radius: 6px; display: flex; align-items: center; justify-content: center; font-size: 12px; font-weight: 500; }
.btn.wide { width: 280px; }
.btn.del { color: #dc2626; }
.sb-main { margin-left: 24px; padding-top: 6px; }
.sb-main b { height: 469px; margin: 214px 0 5px; }
.overlay { position: absolute; inset: 0; background: rgba(0,0,0,.8); }

/* customer details dialog */
.modal { position: absolute; left: 416px; top: 78px; width: 768px; height: 618px; border: 1px solid #d9dce0; border-left-color: #f9fafd; border-radius: 8px; background: #f9fafd; box-shadow: 0 10px 15px -3px rgba(0,0,0,.15); }
.mclip { height: 616px; display: flex; overflow: hidden; }
.mcontent { width: 751px; padding-left: 24px; margin-top: -8px; }
label { display: block; color: #62646e; }
.modal p { font-weight: 500; }
.addr { display: grid; grid-template-columns: 1fr 1fr; gap: 12px 16px; width: 699px; }
h4 { display: flex; align-items: center; gap: 8px; font-size: 16px; font-weight: 600; line-height: 24px; margin-top: 24px; }
.vehicle { margin-top: 12px; width: 703px; height: 396px; border: 1px solid #dfe1e5; border-radius: 8px; padding: 12px; display: flex; gap: 16px; }
.thumb { width: 96px; height: 96px; flex: none; border: 2px solid #fdba74; border-radius: 6px; background: linear-gradient(90deg, #fff7ed, #fffbe8); display: flex; align-items: center; justify-content: center; }
.thumb svg { width: 84px; height: 48px; }
.vinfo { flex: 1; }
.vgrid { display: grid; grid-template-columns: 1fr 1fr; gap: 8px; }
.modal .vid { color: #ea580c; }
.badge { display: block; width: 93px; height: 22px; margin-top: 4px; border-radius: 6px; background: #0080ff; color: #fafafa; font-size: 12px; font-weight: 600; line-height: 22px; text-align: center; white-space: nowrap; }
.badge.grey { width: 100px; margin: 0; background: #eeeff3; color: #33333a; }
.dash { font-weight: 400; }
.parts-label { font-weight: 500; color: #62646e; margin-top: 15px; }
.part { height: 40px; border: 1px solid #dfe1e5; border-radius: 6px; background: #f7f8f8; padding: 0 8px; display: flex; align-items: center; gap: 8px; margin-top: 8px; font-weight: 500; }
.parts-label + .part { margin-top: 9px; }
.sb-modal { background: #fcfcfc; padding-top: 6px; }
.sb-modal b { height: 355px; margin: 232px 0 6px; }

/* taskbar */
.taskbar { height: 40px; display: flex; background: linear-gradient(90deg, #2a171b 0, #21181c 300px, #1d181d 500px, #241d20 700px, #2a211f 850px, #28211f 1050px, #2f1c20 1220px, #171822 1310px, #101722 1450px, #131a20 1600px); color: #fff; font-family: "Open Sans", sans-serif; }
.start { width: 48px; display: flex; align-items: center; justify-content: center; }
.search { width: 288px; border: 1px solid #6d7577; background: #3c4548; display: flex; align-items: center; padding-left: 11px; font-size: 13.9px; color: #e2e4e5; }
.search span { margin-left: 11px; flex: 1; white-space: nowrap; padding-top: 1px; }
.art { width: 64px; height: 38px; margin-right: 2px; }
.apps { display: flex; padding-left: 1px; }
.apps span { width: 49.05px; display: flex; align-items: center; justify-content: center; position: relative; }
.apps .view { padding-right: 4px; }
.apps svg { width: 24px; height: 24px; }
.apps .open::after { content: ""; position: absolute; left: 5px; right: 4px; bottom: 0; height: 2px; background: #76a9cf; }
.apps .current { background: linear-gradient(90deg, transparent 1px, #26333d 1px 45px, #1d2730 45px 46px, #26333d 46px); }
.apps .open.current::after { left: 1px; right: 0; }
.a-txt { font: 9px "Open Sans", sans-serif; fill: #fff; }
.sony { font: 700 6px "Liberation Serif", serif; fill: #fff; }
.liv { font: 700 12px "Open Sans", sans-serif; fill: #ffb52a; }
.hot { font: 6px "Open Sans", sans-serif; fill: #d5dade; }
.it { font-style: italic; font-weight: 700; }
.tray { margin-left: auto; display: flex; align-items: center; }
.tray svg { margin-right: 7px; }
.lang { font-size: 11.6px; margin: 0 11px 0 2px; }
.clock { width: 62px; font-size: 11.4px; line-height: 18px; text-align: center; white-space: nowrap; margin-right: 15px; }
.tray i { width: 1px; height: 40px; background: #737880; margin: 0 4px 0 12px; }
```
